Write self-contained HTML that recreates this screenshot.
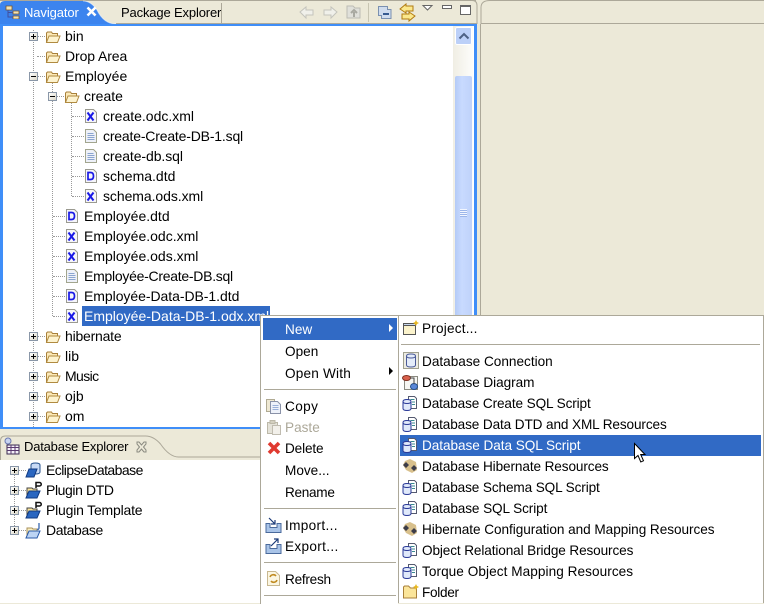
<!DOCTYPE html>
<html><head><meta charset="utf-8"><style>
html,body{margin:0;padding:0}
body{width:764px;height:603px;overflow:hidden;position:relative;background:#ece9d8;font:14px/20px "Liberation Sans",sans-serif;color:#000}
div,svg,span.a{position:absolute}
.t{white-space:nowrap;height:20px}
.m{white-space:nowrap;font-size:13.6px;height:20px;margin-top:1px}
.dv{width:0;border-left:1px dotted #999}
.dh{height:0;border-top:1px dotted #999}
.ex{width:7px;height:7px;border:1px solid #8a97a8;background:linear-gradient(135deg,#fff,#dcd8c8);font:0/0 a}
.ex:before{content:"";position:absolute;left:1px;top:3px;width:5px;height:1px;background:#000}
.ex.p:after{content:"";position:absolute;left:3px;top:1px;width:1px;height:5px;background:#000}
.sep{height:1px;background:#aca899}
</style></head><body>
<svg width="0" height="0" style="left:0;top:0"><defs>
<symbol id="fo" viewBox="0 0 16 14"><path d="M1.500 12.500V3l1-1h4l1 1.500h5v2" fill="#fbe9b8" stroke="#a8803a"/><path d="M1.500 12.500L4 6h11l-2.500 6.500z" fill="#fdf3cf" stroke="#b08a40"/></symbol>
<symbol id="x" viewBox="0 0 12 14"><path d="M.5.5h8l3 3v10H.5z" fill="#f6f6fa" stroke="#9a9a90"/><path d="M2.500 3.500l6 8M8.500 3.500l-6 8" stroke="#1a1ae6" stroke-width="2" fill="none"/></symbol>
<symbol id="d" viewBox="0 0 12 14"><path d="M.5.5h8l3 3v10H.5z" fill="#f6f6fa" stroke="#9a9a90"/><path d="M3 3.500v7h2.500q3 0 3-3.500t-3-3.500z" stroke="#1a1ae6" stroke-width="1.700" fill="none"/></symbol>
<symbol id="s" viewBox="0 0 12 14"><path d="M.5.5h8l3 3v10H.5z" fill="#eef1f8" stroke="#a2a58e"/><path d="M2.500 4.500h6M2.500 6.500h7M2.500 8.500h7M2.500 10.500h7" stroke="#8aa4cf" fill="none"/></symbol>
<symbol id="db" viewBox="0 0 16 16"><path d="M6.500 1.500h6l2 2v10h-8z" fill="#fff" stroke="#555a70"/><path d="M8.500 4.500h4M10 7h3M10 9.500h3" stroke="#3a8a90"/><path d="M1 6.500q0-2 4-2t4 2v7q0 2-4 2t-4-2z" fill="#e0e9fa" stroke="#2a3a98"/><path d="M1 6.500q0 2 4 2t4-2" fill="none" stroke="#2a3a98"/></symbol>
<symbol id="hb" viewBox="0 0 16 16"><path d="M3 3l5-2 6 3 1 8-5 3-6-3-3-5z" fill="#d8c08c"/><path d="M1 7l3-3 3 3-3 3zM9 10l3-3 3 3-3 3z" fill="#3c3c48"/></symbol>
</defs></svg>

<!-- tabs top -->
<div style="left:0;top:0;width:476px;height:1px;background:#aca899"></div>
<svg style="left:0;top:0" width="124" height="26"><path d="M0 26V5q0-4 5-4h78q8 0 14 9 7 14 19 14h8v2z" fill="#3c84ee"/><path d="M83 1q8 0 14 9 7 14 19 14" fill="none" stroke="#fff" stroke-opacity=".5"/></svg>
<svg style="left:5px;top:5px" width="16" height="14"><path d="M1 1h6v4H1zM8 6h6v3H8zM8 11h6v3H8z" fill="#f3e2b0" stroke="#78552a" stroke-width=".8"/><path d="M3 5v7h5M3 7.500h5" stroke="#4050a0" fill="none"/></svg>
<div class="t" style="left:24px;top:3px;font-size:13px;color:#fff;letter-spacing:-.1px">Navigator</div>
<svg style="left:86px;top:6px" width="11" height="11"><path d="M1.500 1.500l8 8M9.500 1.500l-8 8" stroke="#fff" stroke-width="2.600"/></svg>
<div class="t" style="left:121px;top:3px;font-size:13px;letter-spacing:-.15px">Package Explorer</div>
<div style="left:221px;top:3px;width:1px;height:21px;background:#aca899"></div>
<div style="left:116px;top:23px;width:361px;height:1px;background:#aca899"></div>
<svg style="left:298px;top:3px" width="182" height="21">
<path d="M2 9l6-5v3h7v5H8v3z" fill="#f0f0ea" stroke="#c4c4bc"/>
<path d="M39 9l-6-5v3h-7v5h7v3z" fill="#f0f0ea" stroke="#c4c4bc"/>
<path d="M49 3h6l2 2h5v10H49z" fill="#e0e0da" stroke="#bcbcb4"/><path d="M56 14V9M53 10l3-3 3 3" stroke="#a8a8a0" stroke-width="2" fill="none"/>
<path d="M70.500 0v19" stroke="#c8c5b2"/>
<path d="M80.500 3.500h9v3h3.500v9H83.500v-3h-3z" fill="#cfdcee" stroke="#7a90b0"/><path d="M85 11h6" stroke="#103a78" stroke-width="1.600"/>
<path d="M102 6l6-5v2h7v5h-7v2z" fill="#fbe88c" stroke="#b07a10"/><path d="M117 13l-6 5v-2h-7v-5h7V9z" fill="#fbe88c" stroke="#b07a10"/>
<path d="M125 2.500h9l-4.500 4.500z" fill="#fff" stroke="#666"/>
<rect x="144.500" y="2.500" width="9" height="3" fill="#fff" stroke="#666"/>
<rect x="162.500" y="2.500" width="10" height="9" fill="#fff" stroke="#666"/><rect x="162" y="2" width="11" height="2" fill="#666"/>
</svg>
<svg style="left:470px;top:0" width="30" height="24"><path d="M0 .5h2q5 0 5 5V24M20 .5q-9 0-9 7V24" fill="none" stroke="#aca899"/></svg>
<div style="left:490px;top:0;width:274px;height:1px;background:#aca899"></div>
<div style="left:480px;top:24px;width:2px;height:292px;border-left:1px solid #aca899"></div>
<div style="left:481px;top:23px;width:283px;height:1px;background:#aca899"></div>

<!-- Navigator body -->
<div style="left:0;top:24px;width:477px;height:405px;background:#3f8ef8"></div>
<div style="left:3px;top:26px;width:471px;height:401px;background:#fff"></div>
<!-- Scrollbar -->
<div style="left:453px;top:26px;width:20px;height:401px;background:linear-gradient(90deg,#f0eee4,#fdfdfb)"></div>
<div style="left:455px;top:27px;width:17px;height:18px;background:#bcd0f8;border-radius:2px;box-shadow:inset 0 0 0 1px #fff"></div>
<svg style="left:458px;top:32px" width="12" height="9"><path d="M1.500 6.500L6 2l4.500 4.500" fill="none" stroke="#4d6185" stroke-width="2"/></svg>
<div style="left:455px;top:76px;width:17px;height:250px;background:linear-gradient(90deg,#b4caf6,#c8daff 40%,#bfd2fa);border-radius:2px"></div>
<div style="left:460px;top:209px;width:7px;height:8px;background:repeating-linear-gradient(#f2f6ff 0 1px,#9cb6ea 1px 2px)"></div>

<!-- Tree lines -->
<div class="dv" style="left:33px;top:30px;height:397px"></div>
<div class="dv" style="left:52px;top:82px;height:234px"></div>
<div class="dv" style="left:71px;top:102px;height:94px"></div>
<div class="dh" style="left:37px;top:56px;width:8px"></div>
<div class="dh" style="left:37px;top:36px;width:8px"></div>
<div class="dh" style="left:37px;top:76px;width:8px"></div>
<div class="dh" style="left:56px;top:96px;width:8px"></div>
<div class="dh" style="left:72px;top:116px;width:12px"></div>
<div class="dh" style="left:72px;top:136px;width:12px"></div>
<div class="dh" style="left:72px;top:156px;width:12px"></div>
<div class="dh" style="left:72px;top:176px;width:12px"></div>
<div class="dh" style="left:72px;top:196px;width:12px"></div>
<div class="dh" style="left:53px;top:216px;width:12px"></div>
<div class="dh" style="left:53px;top:236px;width:12px"></div>
<div class="dh" style="left:53px;top:256px;width:12px"></div>
<div class="dh" style="left:53px;top:276px;width:12px"></div>
<div class="dh" style="left:53px;top:296px;width:12px"></div>
<div class="dh" style="left:53px;top:316px;width:12px"></div>
<div class="dh" style="left:37px;top:336px;width:8px"></div>
<div class="dh" style="left:37px;top:356px;width:8px"></div>
<div class="dh" style="left:37px;top:376px;width:8px"></div>
<div class="dh" style="left:37px;top:396px;width:8px"></div>
<div class="dh" style="left:37px;top:416px;width:8px"></div>

<!-- Expanders -->
<div class="ex p" style="left:29px;top:32px"></div>
<div class="ex" style="left:29px;top:72px"></div>
<div class="ex" style="left:48px;top:92px"></div>
<div class="ex p" style="left:29px;top:332px"></div>
<div class="ex p" style="left:29px;top:352px"></div>
<div class="ex p" style="left:29px;top:372px"></div>
<div class="ex p" style="left:29px;top:392px"></div>
<div class="ex p" style="left:29px;top:412px"></div>

<!-- Folders -->
<svg style="left:45px;top:30px" width="16" height="14"><use href="#fo"/></svg>
<svg style="left:45px;top:50px" width="16" height="14"><use href="#fo"/></svg>
<svg style="left:45px;top:70px" width="16" height="14"><use href="#fo"/></svg>
<svg style="left:64px;top:90px" width="16" height="14"><use href="#fo"/></svg>
<svg style="left:45px;top:330px" width="16" height="14"><use href="#fo"/></svg>
<svg style="left:45px;top:350px" width="16" height="14"><use href="#fo"/></svg>
<svg style="left:45px;top:370px" width="16" height="14"><use href="#fo"/></svg>
<svg style="left:45px;top:390px" width="16" height="14"><use href="#fo"/></svg>
<svg style="left:45px;top:410px" width="16" height="14"><use href="#fo"/></svg>

<!-- File icons -->
<svg style="left:85px;top:109px" width="12" height="14"><use href="#x"/></svg>
<svg style="left:85px;top:129px" width="12" height="14"><use href="#s"/></svg>
<svg style="left:85px;top:149px" width="12" height="14"><use href="#s"/></svg>
<svg style="left:85px;top:169px" width="12" height="14"><use href="#d"/></svg>
<svg style="left:85px;top:189px" width="12" height="14"><use href="#x"/></svg>
<svg style="left:66px;top:209px" width="12" height="14"><use href="#d"/></svg>
<svg style="left:66px;top:229px" width="12" height="14"><use href="#x"/></svg>
<svg style="left:66px;top:249px" width="12" height="14"><use href="#x"/></svg>
<svg style="left:66px;top:269px" width="12" height="14"><use href="#s"/></svg>
<svg style="left:66px;top:289px" width="12" height="14"><use href="#d"/></svg>
<svg style="left:66px;top:309px" width="12" height="14"><use href="#x"/></svg>

<!-- Tree text -->
<div class="t" style="left:65px;top:26px">bin</div>
<div class="t" style="left:65px;top:46px;letter-spacing:-.1px">Drop Area</div>
<div class="t" style="left:65px;top:66px">Employée</div>
<div class="t" style="left:84px;top:86px">create</div>
<div class="t" style="left:103px;top:106px">create.odc.xml</div>
<div class="t" style="left:103px;top:126px;letter-spacing:-.18px">create-Create-DB-1.sql</div>
<div class="t" style="left:103px;top:146px;letter-spacing:-.08px">create-db.sql</div>
<div class="t" style="left:103px;top:166px">schema.dtd</div>
<div class="t" style="left:103px;top:186px;letter-spacing:-.07px">schema.ods.xml</div>
<div class="t" style="left:84px;top:206px">Employée.dtd</div>
<div class="t" style="left:84px;top:226px">Employée.odc.xml</div>
<div class="t" style="left:84px;top:246px">Employée.ods.xml</div>
<div class="t" style="left:84px;top:266px;letter-spacing:-.27px">Employée-Create-DB.sql</div>
<div class="t" style="left:84px;top:286px;letter-spacing:-.05px">Employée-Data-DB-1.dtd</div>
<div style="left:82px;top:306px;width:188px;height:20px;background:#316ac5"></div>
<div class="t" style="left:84px;top:306px;color:#fff">Employée-Data-DB-1.odx.xml</div>
<div class="t" style="left:65px;top:326px;letter-spacing:-.22px">hibernate</div>
<div class="t" style="left:65px;top:346px">lib</div>
<div class="t" style="left:65px;top:366px;letter-spacing:-.6px">Music</div>
<div class="t" style="left:65px;top:386px">ojb</div>
<div class="t" style="left:65px;top:406px">om</div>

<!-- Database Explorer -->
<div style="left:0;top:460px;width:262px;height:143px;background:#fff"></div>
<svg style="left:0;top:435px" width="262" height="26"><path d="M.5 25V6q0-5 5-5h140q8 0 15 8 9 13 18 13h84" fill="none" stroke="#aca899"/></svg>
<svg style="left:4px;top:437px" width="16" height="18"><circle cx="4" cy="4" r="3" fill="#c8d4f0" stroke="#6a78b0"/><path d="M3 8h12v9H3z" fill="#f4f0f8" stroke="#3a2a50"/><path d="M3 10.500h12M3 13.500h12M7 8v9M11 8v9" stroke="#5a3a70"/></svg>
<div class="t" style="left:24px;top:437px;font-size:13px;letter-spacing:-.2px">Database Explorer</div>
<svg style="left:136px;top:441px" width="11" height="12"><path d="M1 1h2l2.500 3L8 1h2v2L7.500 6 10 9v2H8L5.500 8 3 11H1V9l2.500-3L1 3z" fill="none" stroke="#8a8a80"/></svg>

<div class="dv" style="left:14px;top:475px;height:55px"></div>
<div class="dh" style="left:19px;top:470px;width:7px"></div>
<div class="dh" style="left:19px;top:490px;width:7px"></div>
<div class="dh" style="left:19px;top:510px;width:7px"></div>
<div class="dh" style="left:19px;top:530px;width:7px"></div>
<div class="ex p" style="left:10px;top:466px"></div>
<div class="ex p" style="left:10px;top:486px"></div>
<div class="ex p" style="left:10px;top:506px"></div>
<div class="ex p" style="left:10px;top:526px"></div>
<svg style="left:25px;top:462px" width="17" height="17"><path d="M6 3q0-2 4.500-2T15 3v7q0 2-4.500 2T6 10z" fill="#c8daf6" stroke="#24508c"/><path d="M1 15l3-8h8l-3 8z" fill="#2a66c0" stroke="#123a80"/></svg>
<svg style="left:25px;top:481px" width="17" height="18"><path d="M2 16V7h5l1 1h4v2" fill="#fbe59a" stroke="#444"/><path d="M1 17l3-7h11l-3 7z" fill="#2a66c0" stroke="#123a80"/><path d="M11 7V1.500h3.500a1.700 1.700 0 010 3.500H11" fill="none" stroke="#111" stroke-width="1.500"/></svg>
<svg style="left:25px;top:501px" width="17" height="18"><path d="M2 16V7h5l1 1h4v2" fill="#fbe59a" stroke="#444"/><path d="M1 17l3-7h11l-3 7z" fill="#2a66c0" stroke="#123a80"/><path d="M11 7V1.500h3.500a1.700 1.700 0 010 3.500H11" fill="none" stroke="#111" stroke-width="1.500"/></svg>
<svg style="left:25px;top:521px" width="17" height="18"><path d="M2 16V7h5l1 1h4v2" fill="#fbf0c0" stroke="#a8905a"/><path d="M1 17l3-7h11l-3 7z" fill="#bcd4f4" stroke="#2a5aa8"/><path d="M14 2v5q0 2-2 1" fill="none" stroke="#2a5aa8" stroke-width="1.200"/></svg>
<div class="t" style="left:46px;top:460px;letter-spacing:-.55px">EclipseDatabase</div>
<div class="t" style="left:46px;top:480px;letter-spacing:-.4px">Plugin DTD</div>
<div class="t" style="left:46px;top:500px;letter-spacing:-.2px">Plugin Template</div>
<div class="t" style="left:46px;top:520px;letter-spacing:-.38px">Database</div>

<!-- Context menu -->
<div style="left:260px;top:315px;width:137px;height:288px;background:#fff;border-left:1px solid #aca899;border-top:1px solid #aca899"></div>
<div style="left:263px;top:318px;width:134px;height:22px;background:#316ac5"></div>
<div class="m" style="left:285px;top:319px;color:#fff">New</div>
<svg style="left:388px;top:324px" width="6" height="9"><path d="M1 0l4 4-4 4z" fill="#fff"/></svg>
<div class="m" style="left:285px;top:341px">Open</div>
<div class="m" style="left:285px;top:363px;letter-spacing:.2px">Open With</div>
<svg style="left:388px;top:367px" width="6" height="9"><path d="M1 0l4 4-4 4z" fill="#000"/></svg>
<div class="sep" style="left:264px;top:389px;width:132px"></div>
<svg style="left:266px;top:398px" width="16" height="16"><path d="M.5 1.500h8v12h-8z" fill="#eee8d2" stroke="#b0aa92"/><path d="M4.500 3.500h7l3 3v9h-10z" fill="#eef2fa" stroke="#8a92a8"/><path d="M6.500 7.500h6M6.500 9.500h6M6.500 11.500h6" stroke="#9ab0d8"/></svg>
<div class="m" style="left:285px;top:396px;letter-spacing:.4px">Copy</div>
<svg style="left:266px;top:419px" width="16" height="16"><path d="M1.500 3.500h10v11h-10z" fill="#e4e2d8" stroke="#bcb8a8"/><path d="M4 1.500h5v3H4z" fill="#d4d0c0" stroke="#bcb8a8"/><path d="M6.500 6.500h8v9h-8z" fill="#f2f0ea" stroke="#c0bcb0"/></svg>
<div class="m" style="left:285px;top:417px;color:#aca899">Paste</div>
<svg style="left:267px;top:441px" width="14" height="14"><path d="M2 2l10 10M12 2L2 12" stroke="#e03a30" stroke-width="3.600"/></svg>
<div class="m" style="left:285px;top:438px;letter-spacing:-.15px">Delete</div>
<div class="m" style="left:285px;top:460px">Move...</div>
<div class="m" style="left:285px;top:482px;letter-spacing:-.3px">Rename</div>
<div class="sep" style="left:264px;top:508px;width:132px"></div>
<svg style="left:265px;top:517px" width="17" height="16"><path d="M1 6.500h4v4h7v-4h4v9H1z" fill="#a9c4e8" stroke="#4a6a9c"/><path d="M4 1l6 6M10 3v4H6" fill="none" stroke="#1a3a78" stroke-width="1.200"/></svg>
<div class="m" style="left:285px;top:515px;letter-spacing:.33px">Import...</div>
<svg style="left:265px;top:538px" width="17" height="16"><path d="M1 6.500h4v4h7v-4h4v9H1z" fill="#a9c4e8" stroke="#4a6a9c"/><path d="M6 8l7-7M9 1h4v4" fill="none" stroke="#1a3a78" stroke-width="1.200"/></svg>
<div class="m" style="left:285px;top:536px;letter-spacing:.33px">Export...</div>
<div class="sep" style="left:264px;top:562px;width:132px"></div>
<svg style="left:266px;top:570px" width="15" height="17"><path d="M1.500 1.500h8l4 4v10h-12z" fill="#fbf6e2" stroke="#c8b890"/><path d="M4 7a3.500 3.500 0 016-1M11 10a3.500 3.500 0 01-6 1" fill="none" stroke="#c08a20" stroke-width="1.600"/></svg>
<div class="m" style="left:285px;top:569px;letter-spacing:-.25px">Refresh</div>
<div class="sep" style="left:264px;top:595px;width:132px"></div>

<!-- Submenu -->
<div style="left:398px;top:315px;width:366px;height:288px;background:#fff;border-left:1px solid #aca899;border-top:1px solid #aca899;border-right:1px solid #aca899;box-sizing:border-box"></div>
<svg style="left:403px;top:320px" width="16" height="16"><path d="M.5 3.500h12v11H.5z" fill="#fbf3cc" stroke="#555"/><path d="M.5 3.500h12v2H.5z" fill="#c8d8ee" stroke="#555"/><path d="M13 0l1 2 2 1-2 1-1 2-1-2-2-1 2-1z" fill="#e8b820"/></svg>
<div class="m" style="left:422px;top:318px;letter-spacing:.2px">Project...</div>
<div class="sep" style="left:401px;top:344px;width:359px"></div>
<svg style="left:403px;top:352px" width="16" height="18"><rect x=".5" y=".5" width="15" height="16" fill="#ecebe2" stroke="#a0a090"/><path d="M3.500 4q0-2 4.500-2t4.500 2v9q0 2-4.500 2t-4.500-2z" fill="#e4ecfa" stroke="#4a5a98"/><path d="M3.500 4q0 2 4.500 2t4.500-2" fill="none" stroke="#4a5a98"/></svg>
<div class="m" style="left:422px;top:351px">Database Connection</div>
<svg style="left:402px;top:374px" width="17" height="17"><rect x="2.500" y="2.500" width="13" height="13" fill="#f6f6f2" stroke="#8a8a80"/><ellipse cx="4.500" cy="4" rx="4" ry="2.500" fill="#d8604c" stroke="#803020"/><ellipse cx="12" cy="12.500" rx="3.500" ry="3" fill="#5a88d8" stroke="#24508c"/><path d="M8 4h4v6" fill="none" stroke="#444"/></svg>
<div class="m" style="left:422px;top:372px;letter-spacing:-.06px">Database Diagram</div>
<svg style="left:402px;top:395px" width="16" height="16"><use href="#db"/></svg>
<div class="m" style="left:422px;top:393px;letter-spacing:-.12px">Database Create SQL Script</div>
<svg style="left:402px;top:416px" width="16" height="16"><use href="#db"/></svg>
<div class="m" style="left:422px;top:414px;letter-spacing:-.12px">Database Data DTD and XML Resources</div>
<div style="left:400px;top:435px;width:361px;height:21px;background:#316ac5"></div>
<svg style="left:402px;top:437px" width="16" height="16"><use href="#db"/></svg>
<div class="m" style="left:422px;top:435px;color:#fff;letter-spacing:-.05px">Database Data SQL Script</div>
<svg style="left:402px;top:458px" width="16" height="16"><use href="#hb"/></svg>
<div class="m" style="left:422px;top:456px;letter-spacing:-.11px">Database Hibernate Resources</div>
<svg style="left:402px;top:479px" width="16" height="16"><use href="#db"/></svg>
<div class="m" style="left:422px;top:477px;letter-spacing:-.12px">Database Schema SQL Script</div>
<svg style="left:402px;top:500px" width="16" height="16"><use href="#db"/></svg>
<div class="m" style="left:422px;top:498px;letter-spacing:-.1px">Database SQL Script</div>
<svg style="left:402px;top:521px" width="16" height="16"><use href="#hb"/></svg>
<div class="m" style="left:422px;top:519px;letter-spacing:-.05px">Hibernate Configuration and Mapping Resources</div>
<svg style="left:402px;top:542px" width="16" height="16"><use href="#db"/></svg>
<div class="m" style="left:422px;top:540px;letter-spacing:-.12px">Object Relational Bridge Resources</div>
<svg style="left:402px;top:563px" width="16" height="16"><use href="#db"/></svg>
<div class="m" style="left:422px;top:561px;letter-spacing:.06px">Torque Object Mapping Resources</div>
<svg style="left:403px;top:584px" width="16" height="15"><path d="M.5 14V3l1-1h4l2 2h6v10z" fill="#fbe59a" stroke="#a8803a"/><path d="M13 0l1 2 2 1-2 1-1 2-1-2-2-1 2-1z" fill="#e8b820"/></svg>
<div class="m" style="left:422px;top:582px;letter-spacing:-.3px">Folder</div>

<!-- Cursor -->
<svg style="left:633px;top:442px" width="14" height="23"><path d="M1.500 1.500v15l3.500-3 2.800 6.500 2.700-1.200-2.800-6.300H12z" fill="#fff" stroke="#000"/></svg>
</body></html>
